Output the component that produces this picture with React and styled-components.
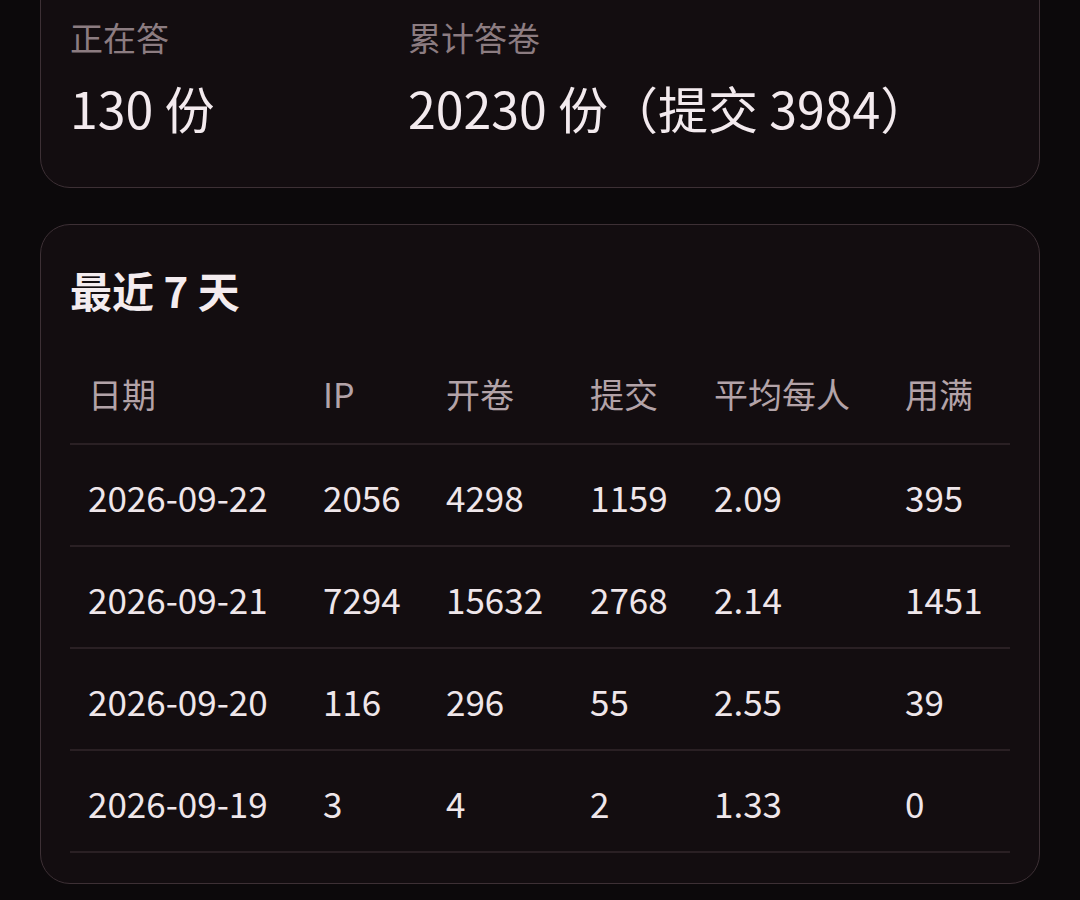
import styled, { createGlobalStyle } from "styled-components";

const GlobalStyle = createGlobalStyle`
  html, body {
    margin: 0;
    padding: 0;
    background: #0c090b;
  }
  body {
    font-family: "Noto Sans CJK SC", "Noto Sans", sans-serif;
    color: #f1e8ec;
  }
`;

const Page = styled.div`
  width: 1080px;
  height: 900px;
  overflow: hidden;
  box-sizing: border-box;
  padding: 0 40px;
  display: flex;
  flex-direction: column;
  gap: 36px;
`;

const Card = styled.section`
  box-sizing: border-box;
  width: 1000px;
  background: #130d10;
  border: 1px solid #3d3035;
  border-radius: 30px;
  padding: ${(p) => p.$padding || "30px 29px"};
  margin-top: ${(p) => p.$offset || "0"};
`;

const StatGrid = styled.div`
  display: grid;
  grid-template-columns: 338px 1fr;
`;

const Stat = styled.div`
  display: flex;
  flex-direction: column;
  gap: 18px;
`;

const StatLabel = styled.div`
  font-size: 33px;
  line-height: 44px;
  color: #8c7c81;
`;

const StatValue = styled.div`
  font-size: 50px;
  line-height: 60px;
  color: #f3eaee;
`;

const Title = styled.h2`
  margin: 0;
  font-size: 42px;
  line-height: 58px;
  font-weight: 700;
  color: #f4ecef;
`;

const Table = styled.div`
  margin-top: 24px;
  display: flex;
  flex-direction: column;
`;

const Row = styled.div`
  box-sizing: border-box;
  display: grid;
  grid-template-columns: 235px 123px 144px 124px 191px 1fr;
  height: 102px;
  align-items: center;
  border-bottom: 2px solid #2a2024;
`;

const Cell = styled.div`
  padding-left: 18px;
  font-size: ${(p) => (p.$head ? "34px" : "35px")};
  color: ${(p) => (p.$head ? "#b3a3a8" : "#efe6ea")};
  white-space: nowrap;
  padding-top: ${(p) => (p.$head ? "0" : "3px")};
`;

const headers = ["日期", "IP", "开卷", "提交", "平均每人", "用满"];

const rows = [
  ["2026-09-22", "2056", "4298", "1159", "2.09", "395"],
  ["2026-09-21", "7294", "15632", "2768", "2.14", "1451"],
  ["2026-09-20", "116", "296", "55", "2.55", "39"],
  ["2026-09-19", "3", "4", "2", "1.33", "0"],
];

export default function App() {
  return (
    <>
      <GlobalStyle />
      <Page>
        <Card $offset="-60px" $padding="74px 29px 50px">
          <StatGrid>
            <Stat>
              <StatLabel>正在答</StatLabel>
              <StatValue>130 份</StatValue>
            </Stat>
            <Stat>
              <StatLabel>累计答卷</StatLabel>
              <StatValue>20230 份（提交 3984）</StatValue>
            </Stat>
          </StatGrid>
        </Card>

        <Card $padding="36px 29px 30px">
          <Title>最近 7 天</Title>
          <Table>
            <Row $head>
              {headers.map((h) => (
                <Cell $head key={h}>
                  {h}
                </Cell>
              ))}
            </Row>
            {rows.map((r) => (
              <Row key={r[0]}>
                {r.map((v, i) => (
                  <Cell key={i}>{v}</Cell>
                ))}
              </Row>
            ))}
          </Table>
        </Card>
      </Page>
    </>
  );
}
